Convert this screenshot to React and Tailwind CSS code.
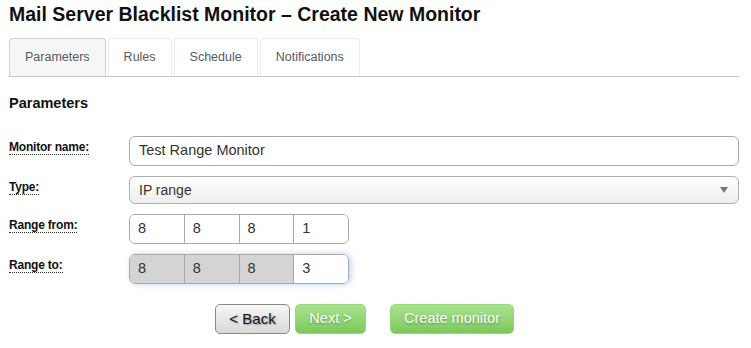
import React from 'react';

const tabs = ['Parameters', 'Rules', 'Schedule', 'Notifications'];

const Label = ({ children }) => (
  <div className="w-[120px] shrink-0 pt-[4px] text-[12px] leading-[15px]">
    <span className="font-bold text-[#111] border-b border-dotted border-[#333] tracking-[-0.2px]">
      {children}
    </span>
  </div>
);

const IpRange = ({ values, locked, focus }) => (
  <div
    className={`flex h-[30px] w-[220px] rounded-[6px] border border-[#a9a9a9] overflow-hidden ${
      focus ? 'shadow-[2px_0_6px_rgba(102,160,230,0.45)]' : ''
    }`}
  >
    {values.map((v, i) => (
      <div
        key={i}
        className={`flex-1 flex items-center pl-[8px] text-[14.5px] text-[#333] ${
          i > 0 ? 'border-l border-[#a9a9a9]' : ''
        } ${locked && i < 3 ? 'bg-[#d4d4d4]' : 'bg-white'}`}
      >
        {v}
      </div>
    ))}
  </div>
);

export default function App() {
  return (
    <div className="min-h-screen bg-white pl-[9px] pr-[12px] font-['Liberation_Sans',Arial,sans-serif]">
      <h1 className="pt-[3px] text-[19.5px] leading-[22px] font-bold text-[#111]">
        Mail Server Blacklist Monitor – Create New Monitor
      </h1>

      {/* Tabs */}
      <ul className="mt-[13px] flex gap-[2px] border-b border-[#c8c8c8]">
        {tabs.map((t, i) => (
          <li
            key={t}
            className={`h-[38px] flex items-center px-[15px] text-[12.5px] text-[#555a66] rounded-t-[4px] border border-b-0 ${
              i === 0 ? 'bg-[#f6f6f6] border-[#d0d0d0]' : 'bg-white border-[#ececec]'
            }`}
          >
            {t}
          </li>
        ))}
      </ul>

      <h2 className="mt-[18px] text-[14.5px] leading-[17px] font-bold text-[#111]">Parameters</h2>

      <div className="mt-[24px] flex flex-col gap-[10px]">
        <div className="flex">
          <Label>Monitor name:</Label>
          <div className="flex-1 h-[30px] rounded-[6px] border border-[#a9a9a9] flex items-center pl-[9px] text-[14.5px] text-[#333]">
            Test Range Monitor
          </div>
        </div>

        <div className="flex">
          <Label>Type:</Label>
          <div className="flex-1 h-[28px] rounded-[6px] border border-[#b0b0b0] bg-gradient-to-b from-white to-[#ededed] flex items-center justify-between pl-[9px] pr-[10px] text-[14px] text-[#333]">
            <span>IP range</span>
            <span className="w-0 h-0 border-l-[4px] border-r-[4px] border-t-[6px] border-l-transparent border-r-transparent border-t-[#777]" />
          </div>
        </div>

        <div className="flex">
          <Label>Range from:</Label>
          <IpRange values={['8', '8', '8', '1']} />
        </div>

        <div className="flex">
          <Label>Range to:</Label>
          <IpRange values={['8', '8', '8', '3']} locked focus />
        </div>
      </div>

      {/* Actions */}
      <div className="mt-[20px] flex pl-[206px]">
        <button className="h-[30px] w-[75px] rounded-[5px] border border-[#8a8a8a] bg-gradient-to-b from-[#f6f6f6] to-[#d9d9d9] text-[15px] text-[#111] [text-shadow:1px_1px_2px_rgba(0,0,0,0.35)]">
          &lt; Back
        </button>
        <button className="ml-[5px] h-[30px] w-[71px] rounded-[5px] border border-[#96d97a] bg-gradient-to-b from-[#a9e38e] to-[#7cc85c] text-[14.5px] text-white [text-shadow:0_1px_2px_rgba(0,0,0,0.3)]">
          Next &gt;
        </button>
        <button className="ml-[24px] h-[30px] w-[124px] rounded-[5px] border border-[#96d97a] bg-gradient-to-b from-[#a9e38e] to-[#7cc85c] text-[14.5px] text-white [text-shadow:0_1px_2px_rgba(0,0,0,0.3)]">
          Create monitor
        </button>
      </div>
    </div>
  );
}
